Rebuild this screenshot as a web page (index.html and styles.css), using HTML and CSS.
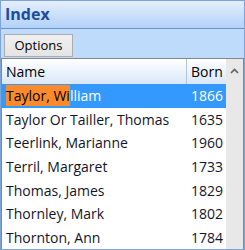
FILE: index.html
```html
<!DOCTYPE html>
<html>
<head>
<meta charset="utf-8">
<link rel="stylesheet" href="styles.css">
</head>
<body>
<div class="window">
  <div class="title">Index</div>
  <div class="toolbar"><button class="btn">Options</button></div>
  <div class="list">
    <div class="table">
      <div class="row head"><div class="c-name">Name</div><div class="c-born">Born</div></div>
      <div class="row sel"><div class="c-name"><span class="match">Taylor, Wi</span>lliam</div><div class="c-born">1866</div></div>
      <div class="row"><div class="c-name">Taylor Or Tailler, Thomas</div><div class="c-born">1635</div></div>
      <div class="row"><div class="c-name">Teerlink, Marianne</div><div class="c-born">1960</div></div>
      <div class="row"><div class="c-name">Terril, Margaret</div><div class="c-born">1733</div></div>
      <div class="row"><div class="c-name">Thomas, James</div><div class="c-born">1829</div></div>
      <div class="row"><div class="c-name">Thornley, Mark</div><div class="c-born">1802</div></div>
      <div class="row"><div class="c-name">Thornton, Ann</div><div class="c-born">1784</div></div>
    </div>
    <div class="scroll">
      <svg class="up" width="9" height="6" viewBox="0 0 9 6"><path d="M1 5 L4.5 1.5 L8 5" fill="none" stroke="#606060" stroke-width="1.6"/></svg>
    </div>
  </div>
</div>
</body>
</html>
```
FILE: styles.css
```css
html, body { margin: 0; padding: 0; }
body { width: 245px; height: 250px; overflow: hidden; font-family: "Open Sans", "Noto Sans", sans-serif; }
.window {
  box-sizing: border-box; width: 245px; height: 250px;
  border: 1px solid #7ea3d6; background: #bfdbfc;
  display: flex; flex-direction: column; overflow: hidden;
}
.title {
  height: 28px; flex: none; box-sizing: border-box;
  background: linear-gradient(#e4effd, #b3d1f8);
  border-bottom: 1px solid #6b92c8;
  color: #1d4c9b; font-weight: bold; font-size: 16px;
  line-height: 27px; padding-left: 4px;
}
.toolbar { flex: none; height: 29px; box-sizing: border-box; padding: 4px 3px 0; }
.btn {
  box-sizing: border-box; width: 69px; height: 23px; margin: 0; padding: 0;
  border: 1px solid #adadad; background: linear-gradient(#f0f0f0, #e4e4e4);
  font-family: "Open Sans", sans-serif; font-size: 13px; color: #000;
}
.list {
  flex: 1; display: flex; border: 1px solid #828790; border-bottom: none;
  background: #fff;
}
.table { flex: 1; }
.row { display: flex; height: 23.6px; align-items: center; font-size: 14px; color: #141428; }
.head { height: 25px; background: linear-gradient(#ffffff, #d9e7f8); color: #000; }
.head .c-name { border-right: 1px solid #b0c4dc; height: 100%; display: flex; align-items: center; }
.c-name { width: 180px; padding-left: 4px; }
.c-born { padding-left: 5px; }
.head .c-born { padding-left: 4px; }
.sel { background: #3399ff; color: #fff; }
.match { background: #ff8a2a; color: #000; display: inline-block; height: 21px; line-height: 21px; }
.scroll { width: 17px; flex: none; background: #e8e8e8; display: flex; justify-content: center; }
.up { margin-top: 9px; }
```
